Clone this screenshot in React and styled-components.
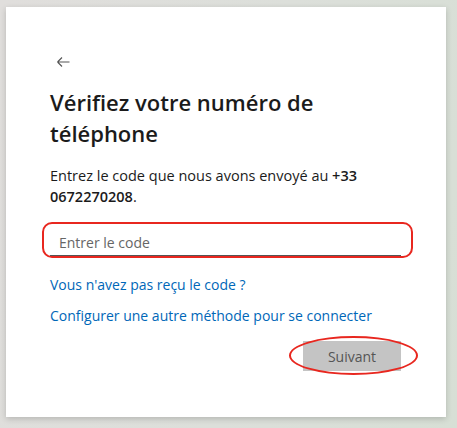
import React from 'react';
import { createGlobalStyle, styled } from 'styled-components';

const GlobalStyle = createGlobalStyle`
  html, body {
    margin: 0;
    padding: 0;
  }
  body {
    font-family: 'Open Sans', 'Noto Sans', sans-serif;
    background: linear-gradient(100deg, #e0dedc 0%, #dcdfda 55%, #d7dfd5 100%);
    width: 457px;
    height: 428px;
    overflow: hidden;
  }
`;

const BackArrow = () => (
  <svg width="16" height="16" viewBox="0 0 16 16" fill="none">
    <path d="M2.5 8h12M2.5 8l4.5-4.5M2.5 8l4.5 4.5" stroke="#555" strokeWidth="1.1" />
  </svg>
);

const App = () => {
  return (
    <Page>
      <GlobalStyle />
      <Card>
        <BackButton aria-label="Retour">
          <BackArrow />
        </BackButton>

        <Title>
          Vérifiez votre numéro de
          <br />
          téléphone
        </Title>

        <Description>
          Entrez le code que nous avons envoyé au <strong>+33</strong>
          <br />
          <strong>0672270208</strong>.
        </Description>

        <Highlight>
          <CodeInput type="text" placeholder="Entrer le code" />
        </Highlight>

        <Links>
          <Link href="#">Vous n'avez pas reçu le code ?</Link>
          <Link href="#">Configurer une autre méthode pour se connecter</Link>
        </Links>

        <Actions>
          <NextButton>Suivant</NextButton>
        </Actions>
      </Card>
    </Page>
  );
};

export default App;

const Page = styled.div`
  padding: 7px 11px 11px 6px;
`;

const Card = styled.div`
  box-sizing: border-box;
  width: 440px;
  height: 410px;
  background: #fff;
  box-shadow: 0 2px 6px rgba(0, 0, 0, 0.18);
  padding: 47px 45px 0 44px;
  display: flex;
  flex-direction: column;
`;

const BackButton = styled.button`
  width: 20px;
  height: 16px;
  padding: 0;
  margin: 0 0 0 5px;
  border: none;
  background: none;
  display: flex;
  align-items: center;
`;

const Title = styled.h1`
  margin: 17px 0 0;
  font-size: 22px;
  line-height: 31px;
  font-weight: 600;
  color: #1b1b1b;
`;

const Description = styled.p`
  margin: 16px 0 0;
  font-size: 14.5px;
  line-height: 21px;
  color: #1b1b1b;

  strong {
    font-weight: 600;
  }
`;

const Highlight = styled.div`
  margin: 15px -12px 0 -8px;
  border: 2px solid #e8271f;
  border-radius: 10px;
  padding: 6px 10px 0 6px;
`;

const CodeInput = styled.input`
  box-sizing: border-box;
  width: 100%;
  height: 26px;
  border: none;
  border-bottom: 1px solid #555;
  padding: 0 9px;
  font-family: inherit;
  font-size: 14px;
  color: #1b1b1b;
  outline: none;

  &::placeholder {
    color: #666;
  }
`;

const Links = styled.div`
  margin-top: 16px;
  display: flex;
  flex-direction: column;
  gap: 10px;
`;

const Link = styled.a`
  font-size: 14px;
  line-height: 21px;
  color: #0067b8;
  text-decoration: none;
`;

const Actions = styled.div`
  margin-top: 15px;
  display: flex;
  justify-content: flex-end;
`;

const NextButton = styled.button`
  position: relative;
  width: 98px;
  height: 30px;
  border: none;
  background: #c4c4c4;
  color: #555;
  font-family: inherit;
  font-size: 14px;

  &::after {
    content: '';
    position: absolute;
    left: -14px;
    right: -17px;
    top: -5px;
    bottom: -4px;
    border: 2px solid #e8271f;
    border-radius: 50%;
  }
`;
